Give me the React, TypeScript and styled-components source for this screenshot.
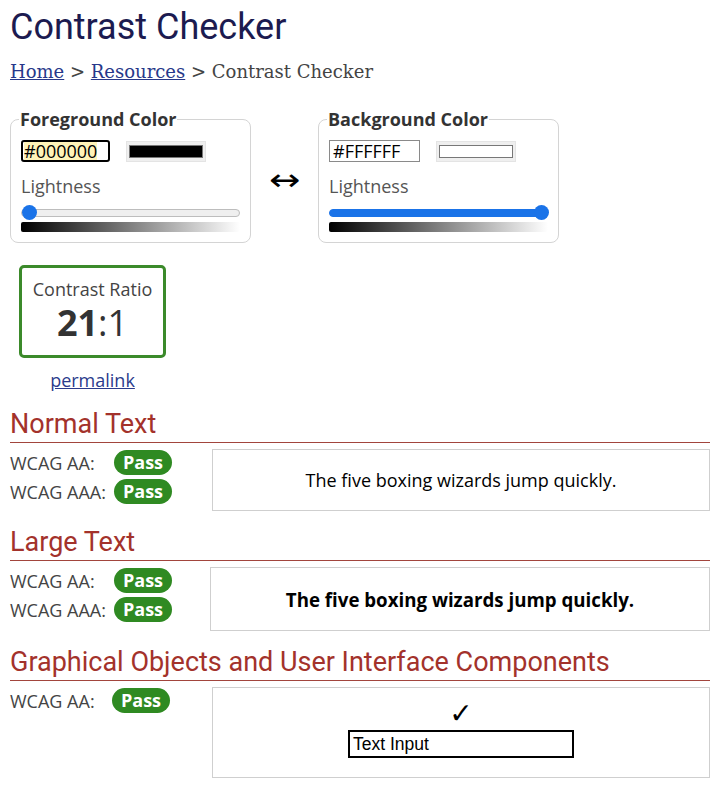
import React from "react";
import styled, { createGlobalStyle } from "styled-components";

const Global = createGlobalStyle`
  html, body { margin: 0; padding: 0; background: #fff; }
  body { font-family: "Open Sans", sans-serif; color: #444; }
`;

const Page = styled.div`
  padding: 0 16px 0 10px;
`;

const Title = styled.h1`
  margin: 6px 0 0;
  font-family: Roboto, sans-serif;
  font-weight: 400;
  font-size: 36px;
  line-height: 43px;
  color: #1c1b50;
`;

const Crumbs = styled.nav`
  margin-top: 12px;
  font-family: "DejaVu Serif", serif;
  font-size: 18px;
  line-height: 21px;
  color: #444;
`;

const Crumb = styled.a`
  color: #27388a;
  text-decoration: underline;
`;

const Pickers = styled.div`
  display: flex;
  align-items: center;
  gap: 16px;
  margin-top: 25px;
`;

const Fieldset = styled.fieldset`
  width: 219px;
  margin: 0;
  padding: 0 10px 10px;
  border: 1px solid #d4d4d4;
  border-radius: 8px;
`;

const Legend = styled.legend`
  padding: 0 1px;
  margin-left: -2px;
  font-weight: 700;
  font-size: 18px;
  line-height: 24px;
  color: #333;
`;

const InputRow = styled.div`
  display: flex;
  align-items: center;
  gap: 16px;
  margin-top: 9px;
`;

const HexBox = styled.div<{ $focused?: boolean }>`
  box-sizing: border-box;
  width: ${(p) => (p.$focused ? "89px" : "91px")};
  height: 22px;
  display: flex;
  align-items: center;
  padding-left: ${(p) => (p.$focused ? "1px" : "3px")};
  border: ${(p) => (p.$focused ? "2px solid #000" : "1px solid #8a8a8a")};
  border-radius: ${(p) => (p.$focused ? "3px" : "0")};
  font-size: 18px;
  color: #000;
  line-height: 18px;
`;

const Selected = styled.span`
  background: #fff3b8;
`;

const Swatch = styled.div<{ $color: string }>`
  box-sizing: border-box;
  width: 80px;
  height: 21px;
  background: #efefef;
  border: 1px solid #e4e4e4;
  padding: 3px 2px;
  display: flex;
  &::after {
    content: "";
    flex: 1;
    background: ${(p) => p.$color};
    border: 1px solid #777;
  }
`;

const Label = styled.div`
  margin-top: 12px;
  font-size: 18px;
  line-height: 24px;
  color: #555;
`;

const SliderWrap = styled.div`
  position: relative;
  margin-top: 7px;
  height: 15px;
  display: flex;
  align-items: center;
`;

const Track = styled.div<{ $fill: number }>`
  flex: 1;
  height: 8px;
  box-sizing: border-box;
  border-radius: 4px;
  border: 1px solid ${(p) => (p.$fill > 0 ? "#1a73e8" : "#bdbdbd")};
  background: ${(p) => (p.$fill > 0 ? "#1a73e8" : "#efefef")};
`;

const Thumb = styled.div`
  position: absolute;
  top: 0;
  width: 15px;
  height: 15px;
  margin-left: -7px;
  border-radius: 50%;
  background: #1a73e8;
`;

const Gradient = styled.div`
  margin-top: 2px;
  height: 10px;
  border-radius: 2px;
  background: linear-gradient(to right, #000, #fff);
`;

const Swap = styled.div`
  font-family: "DejaVu Sans", sans-serif;
  font-size: 30px;
  line-height: 30px;
  width: 35px;
  text-align: center;
  color: #000;
  margin-top: 10px;
  transform: scaleX(1.25);
`;

const RatioBlock = styled.div`
  margin: 22px 0 0 9px;
  width: 147px;
  display: flex;
  flex-direction: column;
  align-items: center;
`;

const RatioBox = styled.div`
  box-sizing: border-box;
  width: 147px;
  height: 93px;
  border: 3px solid #3b8a2a;
  border-radius: 5px;
  display: flex;
  flex-direction: column;
  align-items: center;
  padding-top: 9px;
`;

const RatioLabel = styled.div`
  font-size: 18px;
  line-height: 24px;
  color: #444;
`;

const RatioValue = styled.div`
  font-size: 36px;
  line-height: 44px;
  color: #333;
  b { font-weight: 700; }
`;

const Permalink = styled.a`
  margin-top: 10px;
  font-size: 18px;
  line-height: 24px;
  color: #2b3b8c;
  text-decoration: underline;
`;

const SectionTitle = styled.h2<{ $first?: boolean }>`
  margin: ${(p) => (p.$first ? "16px" : "15px")} 0 0;
  padding-bottom: 2px;
  font-family: Roboto, sans-serif;
  font-weight: 400;
  font-size: 27px;
  line-height: 32px;
  color: #a3322b;
  border-bottom: 1px solid #a2453d;
`;

const SectionBody = styled.div`
  display: flex;
  align-items: flex-start;
  margin-top: 6px;
`;

const Results = styled.div<{ $w: number }>`
  width: ${(p) => p.$w}px;
  flex: none;
  display: flex;
  flex-direction: column;
  gap: 4px;
  padding-top: 1px;
`;

const ResultRow = styled.div`
  display: flex;
  align-items: center;
`;

const ResultLabel = styled.span<{ $w: number }>`
  width: ${(p) => p.$w}px;
  font-size: 18px;
  color: #444;
`;

const Badge = styled.span`
  box-sizing: border-box;
  width: 58px;
  height: 25px;
  border-radius: 13px;
  background: #2f8a22;
  color: #fff;
  font-weight: 700;
  font-size: 18px;
  line-height: 25px;
  text-align: center;
`;

const Sample = styled.div<{ $h: number; $large?: boolean }>`
  flex: 1;
  box-sizing: border-box;
  height: ${(p) => p.$h}px;
  border: 1px solid #cfcfcf;
  display: flex;
  align-items: center;
  justify-content: center;
  font-size: ${(p) => (p.$large ? "18.7px" : "18px")};
  font-weight: ${(p) => (p.$large ? 700 : 400)};
  color: #000;
`;

const UiSample = styled.div`
  flex: 1;
  box-sizing: border-box;
  height: 91px;
  border: 1px solid #cfcfcf;
  display: flex;
  flex-direction: column;
  align-items: center;
  padding-top: 12px;
`;

const Check = styled.div`
  font-family: "DejaVu Sans", sans-serif;
  font-size: 28px;
  line-height: 28px;
  font-weight: 700;
  color: #000;
`;

const FakeInput = styled.div`
  box-sizing: border-box;
  width: 226px;
  height: 28px;
  border: 2px solid #000;
  padding-left: 3px;
  font-family: "Liberation Sans", Arial, sans-serif;
  font-size: 17.5px;
  line-height: 24px;
  color: #000;
  margin-top: 2px;
`;

const pct = (v: number) => `${v}%`;

function Picker({ title, hex, color, value, focused }: { title: string; hex: string; color: string; value: number; focused?: boolean }) {
  return (
    <Fieldset>
      <Legend>{title}</Legend>
      <InputRow>
        <HexBox $focused={focused}>{focused ? <Selected>{hex}</Selected> : hex}</HexBox>
        <Swatch $color={color} />
      </InputRow>
      <Label>Lightness</Label>
      <SliderWrap>
        <Track $fill={value} />
        <Thumb style={{ left: value > 0 ? `calc(${pct(value)} - 7px)` : "8px" }} />
      </SliderWrap>
      <Gradient />
    </Fieldset>
  );
}

function ResultList({ levels, w, lw }: { levels: string[]; w: number; lw: number }) {
  return (
    <Results $w={w}>
      {levels.map((l) => (
        <ResultRow key={l}>
          <ResultLabel $w={lw}>WCAG {l}:</ResultLabel>
          <Badge>Pass</Badge>
        </ResultRow>
      ))}
    </Results>
  );
}

export default function App() {
  return (
    <Page>
      <Global />
      <Title>Contrast Checker</Title>
      <Crumbs>
        <Crumb href="#">Home</Crumb> &gt; <Crumb href="#">Resources</Crumb> &gt; Contrast Checker
      </Crumbs>
      <Pickers>
        <Picker title="Foreground Color" hex="#000000" color="#000" value={0} focused />
        <Swap>↔</Swap>
        <Picker title="Background Color" hex="#FFFFFF" color="#fff" value={100} />
      </Pickers>
      <RatioBlock>
        <RatioBox>
          <RatioLabel>Contrast Ratio</RatioLabel>
          <RatioValue>
            <b>21</b>:1
          </RatioValue>
        </RatioBox>
        <Permalink href="#">permalink</Permalink>
      </RatioBlock>

      <SectionTitle $first>Normal Text</SectionTitle>
      <SectionBody>
        <ResultList levels={["AA", "AAA"]} w={202} lw={104} />
        <Sample $h={62}>The five boxing wizards jump quickly.</Sample>
      </SectionBody>

      <SectionTitle>Large Text</SectionTitle>
      <SectionBody>
        <ResultList levels={["AA", "AAA"]} w={200} lw={104} />
        <Sample $h={64} $large>The five boxing wizards jump quickly.</Sample>
      </SectionBody>

      <SectionTitle>Graphical Objects and User Interface Components</SectionTitle>
      <SectionBody>
        <ResultList levels={["AA"]} w={202} lw={102} />
        <UiSample>
          <Check>✓</Check>
          <FakeInput>Text Input</FakeInput>
        </UiSample>
      </SectionBody>
    </Page>
  );
}
